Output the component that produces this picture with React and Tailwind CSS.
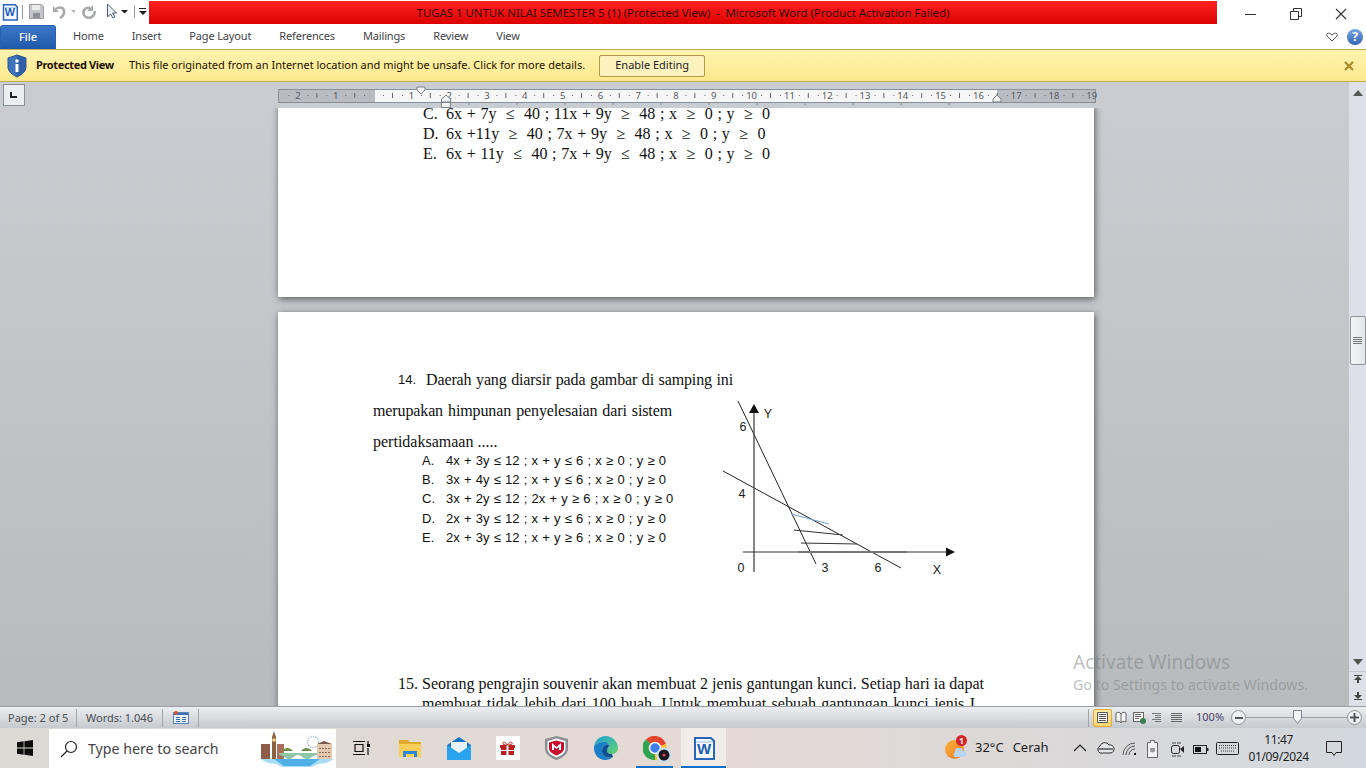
import React from 'react';

const UI = "font-['Noto_Sans','Open_Sans',sans-serif]";
const SERIF = "font-['Liberation_Serif','Times_New_Roman',serif]";

const CM = 37.8;
const ORIGIN = 373.6;

function Ruler() {
  const marks = [];
  for (let n = -3; n <= 19; n++) {
    const x = ORIGIN + n * CM;
    if (n !== 0 && n > -3) {
      marks.push(
        <text key={'n' + n} x={x} y={99} textAnchor="middle" fontSize="9.5" fill="#555a60" fontFamily="Noto Sans, sans-serif">{Math.abs(n)}</text>
      );
    }
    [0.25, 0.5, 0.75].forEach((f) => {
      const px = x + f * CM;
      if (px < 280 || px > 1094) return;
      if (f === 0.5) marks.push(<line key={'t' + n} x1={px} x2={px} y1={93} y2={98} stroke="#666" />);
      else marks.push(<rect key={'d' + n + f} x={px} y={95} width="1" height="1" fill="#666" />);
    });
  }
  const tabs = [469, 517, 565, 613, 661, 709, 757, 805, 853, 901, 949];
  return (
    <svg width="820" height="26" viewBox="278 82 820 26" className="block">
      <rect x="278.5" y="89.5" width="817" height="13" fill="#b9bdc3" stroke="#8b9097" />
      <rect x="375" y="90" width="622" height="12" fill="#f6f6f6" />
      {marks}
      {tabs.map((x) => <line key={x} x1={x} x2={x} y1={102} y2={105} stroke="#8b8f94" />)}
      <path d="M417 87h8v3l-4 4-4-4z" fill="#f2f2f2" stroke="#7d8288" />
      <path d="M441.5 99l4.5-4 4.5 4v3h-9z" fill="#f2f2f2" stroke="#7d8288" />
      <rect x="441.5" y="102.5" width="9" height="5" fill="#f2f2f2" stroke="#7d8288" />
      <path d="M993 99l4-4 4 4v3h-8z" fill="#f2f2f2" stroke="#7d8288" />
    </svg>
  );
}

function WordLogo({ size = 16 }) {
  return (
    <svg width={size} height={size + 2} viewBox="0 0 22 24">
      <path d="M2 2h16l3 3v18H2z" fill="#f4f8fd" stroke="#2a66b8" strokeWidth="2" />
      <path d="M3 6h17" stroke="#9cc0ea" strokeWidth="1" />
      <text x="11" y="18" textAnchor="middle" fontSize="15" fontWeight="700" fill="#1c5cb0" fontFamily="Liberation Sans, sans-serif">W</text>
    </svg>
  );
}

function TitleBar() {
  return (
    <div className="flex h-[24px] shrink-0 items-center bg-white">
      <div className="ml-[2px] w-[17px]"><WordLogo /></div>
      <div className="ml-[3px] h-[14px] w-px bg-[#9a9a9a]" />
      <svg width="126" height="24" viewBox="23 0 126 24" className="shrink-0">
        <path d="M29.5 4.5h12l2 2v12h-14z" fill="#c4c6c9" stroke="#9b9da0" />
        <rect x="32" y="5" width="8" height="5" fill="#eceded" />
        <rect x="33" y="13" width="7" height="5" fill="#8e9093" />
        <path d="M53 6v6h6z" fill="#a7a9ac" />
        <path d="M56 9c4-3 9-1 8 4-.4 2-2 4-4 5" fill="none" stroke="#a7a9ac" strokeWidth="2.5" />
        <path d="M71 10h5l-2.500 3z" fill="#b5b7ba" />
        <path d="M93 5v6h-6z" fill="#a7a9ac" />
        <path d="M90 8c-5-1-8 3-6 7 1.500 3 6 4 9 1 1.500-1.500 2-3 1.500-5" fill="none" stroke="#a7a9ac" strokeWidth="2.500" />
        <path d="M107.500 4v13l3-3 2.500 4 2-1-2.500-4h4z" fill="#eef2f8" stroke="#4f5f75" />
        <path d="M121 10h7l-3.500 3.500z" fill="#1e1e1e" />
        <rect x="134" y="5" width="1" height="13" fill="#9a9a9a" />
        <rect x="139" y="8" width="7" height="1" fill="#1e1e1e" />
        <path d="M139 11h8l-4 4z" fill="#1e1e1e" />
      </svg>
      <div className={`flex h-[23px] w-[1068px] items-center justify-center self-start mt-px bg-gradient-to-b from-[#ff2020] to-[#dc0000] text-[11.5px] tracking-[-0.06px] whitespace-pre text-[#3a0505] ${UI}`}>
        TUGAS 1 UNTUK NILAI SEMESTER 5 (1) (Protected View)  -  Microsoft Word (Product Activation Failed)
      </div>
      <div className="flex flex-1 items-center">
        <svg width="149" height="24" viewBox="1217 0 149 24">
          <rect x="1245" y="14" width="11" height="1" fill="#333" />
          <path d="M1290.500 11.500h8v8h-8zM1293.500 11v-2.500h8v8h-3" fill="none" stroke="#333" />
          <path d="M1336 9l10 10M1346 9l-10 10" stroke="#333" strokeWidth="1.100" />
        </svg>
      </div>
    </div>
  );
}

function Tabs() {
  const items = ['Home', 'Insert', 'Page Layout', 'References', 'Mailings', 'Review', 'View'];
  return (
    <div className={`flex h-[25px] shrink-0 items-center bg-white text-[11px] text-[#3f4247] ${UI}`}>
      <div className="flex h-[24px] w-[56px] items-center justify-center self-end rounded-t-[3px] border border-b-0 border-[#2a5fae] bg-gradient-to-b from-[#3b78c8] to-[#1f58aa] font-medium text-white">File</div>
      <div className="ml-[17px] flex gap-[28px] tracking-[-0.15px]">
        {items.map((t) => <span key={t}>{t}</span>)}
      </div>
      <div className="ml-auto flex items-center pr-[1px]">
        <svg width="12" height="10" viewBox="0 0 12 10" className="mr-[9px]">
          <path d="M6 9L1 4c-1-2 1-3.500 3-2.500L6 3l2-1.500c2-1 4 .5 3 2.500z" fill="#fff" stroke="#555" />
        </svg>
        <div className="flex h-[16px] w-[16px] items-center justify-center rounded-full bg-gradient-to-b from-[#7aa5e0] to-[#2f66b5] text-[12px] leading-none font-bold text-white mr-[2px]">?</div>
      </div>
    </div>
  );
}

function ProtectedBar() {
  return (
    <div className={`flex h-[33px] shrink-0 items-center border-y border-[#c2ab55] bg-gradient-to-b from-[#fff3b0] to-[#fde98c] text-[11px] text-[#1c1200] ${UI}`}>
      <svg width="20" height="24" viewBox="0 0 20 24" className="ml-[7px]">
        <path d="M10 1l9 3v9c0 5-5 8-9 10C6 21 1 18 1 13V4z" fill="#3f73bb" stroke="#2b568f" />
        <path d="M10 1l9 3v9c0 5-5 8-9 10z" fill="#2f5fa6" />
        <circle cx="10" cy="7" r="1.800" fill="#fff" />
        <rect x="8.500" y="10" width="3" height="8" fill="#fff" />
      </svg>
      <span className="ml-[9px] font-bold tracking-[-0.35px]">Protected View</span>
      <span className="ml-[15px]">This file originated from an Internet location and might be unsafe. Click for more details.</span>
      <button className="ml-[14px] h-[22px] w-[106px] rounded-[2px] border border-[#b39a48] bg-[#fdf2bd] text-[11px] text-[#222]">Enable Editing</button>
      <svg width="10" height="10" viewBox="0 0 10 10" className="ml-auto mr-[12px]">
        <path d="M1 1l8 8M9 1l-8 8" stroke="#a98a2b" strokeWidth="2.200" />
      </svg>
    </div>
  );
}

function Graph() {
  const lbl = { fontSize: 12.5, fill: '#222', fontFamily: 'Liberation Sans, sans-serif', textAnchor: 'middle' };
  return (
    <svg width="240" height="180" viewBox="720 400 240 180" className="absolute left-[442px] top-[88px]">
      <path d="M738 401L816 564M723 471L901 568" stroke="#222" fill="none" />
      <path d="M754 572V410" stroke="#444" strokeWidth="1.300" fill="none" />
      <path d="M754 404l-5 9h10z" fill="#111" />
      <path d="M743 552H948" stroke="#333" fill="none" />
      <path d="M955 552l-9-4.500v9z" fill="#111" />
      <path d="M791 514L829 524" stroke="#6f9fd0" fill="none" />
      <path d="M794 530L843 535M801 543L857 544" stroke="#333" fill="none" />
      <path d="M798 552H907" stroke="#777" strokeWidth="2" fill="none" />
      <text x="768" y="418" {...lbl}>Y</text>
      <text x="743" y="431" {...lbl}>6</text>
      <text x="742" y="498" {...lbl}>4</text>
      <text x="741" y="572" {...lbl}>0</text>
      <text x="825" y="572" {...lbl}>3</text>
      <text x="878" y="572" {...lbl}>6</text>
      <text x="937" y="574" {...lbl}>X</text>
    </svg>
  );
}

function Doc() {
  const first = [
    ['C.', '6x + 7y  ≤  40 ; 11x + 9y  ≥  48 ; x  ≥  0 ; y  ≥  0'],
    ['D.', '6x +11y  ≥  40 ; 7x + 9y  ≥  48 ; x  ≥  0 ; y  ≥  0'],
    ['E.', '6x + 11y  ≤  40 ; 7x + 9y  ≤  48 ; x  ≥  0 ; y  ≥  0'],
  ];
  const opts = [
    ['A.', '4x + 3y ≤ 12 ; x + y ≤ 6 ; x ≥ 0 ; y ≥ 0'],
    ['B.', '3x + 4y ≤ 12 ; x + y ≤ 6 ; x ≥ 0 ; y ≥ 0'],
    ['C.', '3x + 2y ≤ 12 ; 2x + y ≥ 6 ; x ≥ 0 ; y ≥ 0'],
    ['D.', '2x + 3y ≤ 12 ; x + y ≤ 6 ; x ≥ 0 ; y ≥ 0'],
    ['E.', '2x + 3y ≤ 12 ; x + y ≥ 6 ; x ≥ 0 ; y ≥ 0'],
  ];
  return (
    <div className="relative min-h-0 flex-1 overflow-hidden bg-gradient-to-b from-[#caccd1] to-[#b8babe] pl-[278px]">
      <div className="-mt-[4px] w-[816px]">
        <div className={`h-[193px] bg-white pl-[145px] text-[16px] leading-[20px] text-[#111] shadow-[1px_2px_7px_rgba(0,0,0,0.55)] ${SERIF}`}>
          {first.map(([a, b]) => (
            <div key={a} className="flex whitespace-pre">
              <span className="w-[23px]">{a}</span>
              <span className="[word-spacing:0.7px]">{b}</span>
            </div>
          ))}
        </div>
        <div className={`relative mt-[15px] h-[500px] bg-white pl-[95px] pt-[52px] text-[16px] text-[#111] shadow-[1px_2px_7px_rgba(0,0,0,0.55)] ${SERIF}`}>
          <div className="h-[87px] leading-[31px]">
            <div className="ml-[25px] flex w-[335px]">
              <span className="w-[28px] font-['Liberation_Sans',sans-serif] text-[13px]">14.</span>
              <span className="flex-1 tracking-[-0.12px] [text-align-last:justify]">Daerah yang diarsir pada gambar di samping ini</span>
            </div>
            <div className="w-[299px] tracking-[-0.12px] [text-align-last:justify]">merupakan himpunan penyelesaian dari sistem</div>
            <div>pertidaksamaan .....</div>
          </div>
          <div className="pl-[49px] font-['Liberation_Sans',sans-serif] text-[13px] leading-[19.2px]">
            {opts.map(([a, b]) => (
              <div key={a} className="flex whitespace-pre">
                <span className="w-[24px]">{a}</span>
                <span className="[word-spacing:0.6px]">{b}</span>
              </div>
            ))}
          </div>
          <div className="mt-[127px] ml-[25px] leading-[20px]">
            <div className="flex w-[586px]">
              <span className="w-[24px]">15.</span>
              <span className="flex-1 [text-align-last:justify]">Seorang pengrajin souvenir akan membuat 2 jenis gantungan kunci. Setiap hari ia dapat</span>
            </div>
            <div className="ml-[24px] w-[553px] [text-align-last:justify]">membuat tidak lebih dari 100 buah. Untuk membuat sebuah gantungan kunci jenis I</div>
          </div>
          <Graph />
        </div>
      </div>
    </div>
  );
}

function ScrollBar() {
  return (
    <div className="flex w-[17px] shrink-0 flex-col items-center bg-[#dde0e7] pt-[8px]">
      <svg width="10" height="6" viewBox="0 0 10 6"><path d="M5 0l5 6H0z" fill="#555" /></svg>
      <div className="mt-[220px] flex h-[49px] w-[16px] items-center justify-center rounded-[2px] border border-[#8f949b] bg-gradient-to-r from-[#f3f4f6] to-[#e4e6ea]">
        <svg width="9" height="8" viewBox="0 0 9 8"><path d="M0 .5h9M0 2.500h9M0 4.500h9M0 6.500h9" stroke="#777" /></svg>
      </div>
      <svg width="10" height="6" viewBox="0 0 10 6" className="mt-auto mb-[6px]"><path d="M5 6l5-6H0z" fill="#555" /></svg>
      <div className="h-px w-full bg-[#c3c6cc]" />
      <svg width="8" height="9" viewBox="0 0 8 9" className="mt-[2px]"><path d="M0 1h8v1H0zM4 2l4 4H5v3H3V6H0z" fill="#444" /></svg>
      <svg width="8" height="9" viewBox="0 0 8 9" className="mt-[9px] mb-[5px]"><path d="M0 7h8v1H0zM4 7L0 3h3V0h2v3h3z" fill="#444" /></svg>
    </div>
  );
}

function Workspace() {
  return (
    <div className="flex min-h-0 flex-1">
      <div className="flex min-w-0 flex-1 flex-col">
        <div className="flex h-[26px] shrink-0 items-center bg-[#c9ccd1]">
          <div className="ml-[3px] flex h-[22px] w-[22px] items-center justify-center border border-[#8b9097] bg-[#eceef1]">
            <svg width="8" height="8" viewBox="0 0 8 8"><path d="M1 1v5h6" fill="none" stroke="#222" strokeWidth="2" /></svg>
          </div>
          <div className="ml-[253px]"><Ruler /></div>
        </div>
        <Doc />
      </div>
      <ScrollBar />
    </div>
  );
}

function StatusBar() {
  return (
    <div className={`flex h-[22px] shrink-0 items-center border-t border-[#9c9fa5] bg-gradient-to-b from-[#eceef1] to-[#c6c9ce] text-[11px] text-[#4a4d52] ${UI}`}>
      <span className="w-[77px] border-r border-[#a2a5aa] pl-[8px] leading-[18px]">Page: 2 of 5</span>
      <span className="w-[86px] border-r border-[#a2a5aa] pl-[9px] leading-[18px]">Words: 1.046</span>
      <div className="flex h-[18px] w-[36px] items-center justify-center border-r border-[#a2a5aa]">
        <svg width="16" height="13" viewBox="0 0 16 13">
          <rect x=".5" y="1.500" width="15" height="11" fill="#e9f0fa" stroke="#5a7fb5" />
          <rect x="1" y="2" width="14" height="2" fill="#3b6fb5" />
          <path d="M3 6.500h4M9 6.500h4M3 8.500h4M9 8.500h4M3 10.500h4M9 10.500h4" stroke="#3b6fb5" />
          <circle cx="3" cy="2" r="2" fill="#d9543c" />
        </svg>
      </div>
      <div className="ml-auto h-[18px] w-px bg-[#a2a5aa]" />
      <div className="ml-[4px] flex h-[18px] w-[19px] items-center justify-center rounded-[2px] border border-[#e0a93a] bg-gradient-to-b from-[#fdeaa5] to-[#fbd66e]">
        <svg width="11" height="11" viewBox="0 0 11 11"><path d="M.5.500h10v10H.500zM2 2.500h7M2 4.500h7M2 6.500h7M2 8.500h7" fill="#fff" stroke="#555" /></svg>
      </div>
      <svg width="74" height="14" viewBox="1114 0 74 14" className="ml-[2px]">
        <path d="M1116 2c2-1 4-1 5 1 1-2 3-2 5-1v9c-2-1-4-1-5 1-1-2-3-2-5-1zM1121 3v9" fill="#f4f4f4" stroke="#666" />
        <rect x="1133.500" y="1.500" width="10" height="9" fill="#f4f4f4" stroke="#666" />
        <path d="M1135 3.500h6M1135 5.500h6M1135 7.500h4" stroke="#666" />
        <circle cx="1143" cy="10" r="3" fill="#3d7f5a" />
        <path d="M1152 2.500h9M1155 4.500h6M1155 6.500h6M1152 8.500h9M1155 10.500h6" stroke="#777" />
        <path d="M1171 2.500h11M1171 4.500h11M1171 6.500h11M1171 8.500h11M1171 10.500h11" stroke="#666" />
      </svg>
      <span className="ml-[8px] w-[29px] whitespace-nowrap text-[#4c3f66]">100%</span>
      <div className="ml-[6px] flex h-[15px] w-[15px] items-center justify-center rounded-full border border-[#8e9197] bg-[#eef0f3]">
        <div className="h-[2px] w-[8px] bg-[#555]" />
      </div>
      <div className="relative h-px w-[101px] bg-[#9ea1a6]">
        <svg width="9" height="14" viewBox="0 0 9 14" className="absolute left-[47px] -top-[7px]">
          <path d="M.5.500h8v8l-4 5-4-5z" fill="#f4f5f7" stroke="#83878d" />
        </svg>
      </div>
      <div className="mr-[4px] flex h-[15px] w-[15px] items-center justify-center rounded-full border border-[#8e9197] bg-[#eef0f3]">
        <svg width="9" height="9" viewBox="0 0 9 9"><path d="M0 4.500h9M4.500 0v9" stroke="#555" strokeWidth="2" /></svg>
      </div>
    </div>
  );
}

function LondonArt() {
  return (
    <svg width="74" height="38" viewBox="0 0 74 38" className="absolute left-[211px] top-[1px]">
      <path d="M0 29h74l-8 4-8 1-6 3H22l-6-3-8-1z" fill="#a9dcf5" />
      <path d="M14 29l10 7h26l10-7z" fill="#4fb0e8" />
      <rect x="1" y="14" width="9" height="15" fill="#8f5c4c" />
      <rect x="17" y="14" width="7" height="15" fill="#a8705a" />
      <path d="M12 7l2-6 2 6v22h-4z" fill="#8d6242" />
      <circle cx="14" cy="10" r="1.800" fill="#f3d98a" />
      <path d="M19 23h38v2c-5 0-6 4-10 4s-5-4-9-4-5 4-9 4-5-4-10-4z" fill="#8fc7a6" />
      <path d="M22 21c3-4 8-4 11 0zM41 21c3-4 8-4 11 0z" fill="#6e8b4b" />
      <circle cx="53" cy="12" r="5.500" fill="none" stroke="#b9c7d8" strokeWidth="1.500" strokeDasharray="1.500 1" />
      <rect x="57" y="14" width="15" height="15" fill="#e4c9b2" />
      <path d="M57 14l7-3 8 3z" fill="#7b5a4a" />
      <path d="M59 18.500h11M59 22.500h11M59 26.500h11" stroke="#8b6b58" strokeDasharray="2 1" />
    </svg>
  );
}

function Slot({ active, running, children }) {
  return (
    <div className={`relative flex h-full items-center justify-center ${active ? 'ml-[2px] w-[45px] bg-[#f1ece8]' : 'w-[49px]'}`}>
      {children}
      {running && <div className={`absolute bottom-0 h-[2px] bg-[#0f6fc6] ${active ? 'inset-x-0' : 'inset-x-[6px]'}`} />}
    </div>
  );
}

function Taskbar() {
  return (
    <div className={`flex h-[40px] shrink-0 items-center bg-gradient-to-r from-[#dbdad5] via-[#e5d9d3] to-[#d2d8de] text-[#1d1d1d] ${UI}`}>
      <div className="flex h-full w-[49px] items-center justify-center">
        <svg width="16" height="16" viewBox="0 0 16 16"><path d="M0 2.200L6.600 1.300V7.600H0zM7.400 1.200L16 0V7.600H7.400zM0 8.400H6.600V14.700L0 13.800zM7.400 8.400H16V16L7.400 14.800z" fill="#0c0c0c" /></svg>
      </div>
      <div className="relative flex h-[39px] w-[287px] items-center self-end bg-white">
        <svg width="18" height="18" viewBox="0 0 18 18" className="ml-[11px]"><circle cx="11" cy="7" r="5.500" fill="none" stroke="#222" strokeWidth="1.200" /><path d="M7 11l-6 6" stroke="#222" strokeWidth="1.300" /></svg>
        <span className="ml-[10px] text-[14.2px] text-[#444]">Type here to search</span>
        <LondonArt />
      </div>
      <Slot>
        <svg width="18" height="16" viewBox="0 0 18 16"><path d="M1 1.500h12M1 14.500h12M3 4.500h8v7H3zM16 8v7M16 1v3" fill="none" stroke="#111" strokeWidth="1.200" /><rect x="15" y="4" width="3" height="3" fill="#111" /></svg>
      </Slot>
      <Slot>
        <svg width="22" height="19" viewBox="0 0 22 19">
          <path d="M0 1h9l2 2h11v4H0z" fill="#e0a92c" />
          <rect y="5" width="22" height="13" fill="#f8cf58" />
          <path d="M4 18v-6h14v6h-3v-3H7v3z" fill="#2b88d8" />
        </svg>
      </Slot>
      <Slot>
        <svg width="24" height="23" viewBox="0 0 24 23">
          <path d="M12 0l12 8v15H0V8z" fill="#1a74c4" />
          <path d="M4 5h16v8l-8 5-8-5z" fill="#e6f3fb" />
          <path d="M0 8l12 8 12-8v15H0z" fill="#29a3ee" />
        </svg>
      </Slot>
      <Slot>
        <div className="flex h-[24px] w-[24px] items-center justify-center bg-white">
          <svg width="15" height="15" viewBox="0 0 15 15">
            <rect x="1" y="6" width="13" height="8" fill="#b8201e" />
            <rect y="4" width="15" height="3" fill="#b8201e" />
            <rect x="6.500" y="4" width="2" height="10" fill="#fff" />
            <rect y="9" width="15" height="1" fill="#fff" />
            <path d="M7.500 4C5 0 2 1 3 3c.5 1 3 1 4.500 1zM7.500 4C10 0 13 1 12 3c-.5 1-3 1-4.500 1z" fill="none" stroke="#b8201e" />
          </svg>
        </div>
      </Slot>
      <Slot>
        <svg width="23" height="24" viewBox="0 0 23 24">
          <path d="M11.500 0L23 3v10c0 5-6 9-11.500 11C6 22 0 18 0 13V3z" fill="#8a8f93" />
          <path d="M11.500 2.500L20.500 5v8c0 4-5 7-9 8.500-4-1.500-9-4.500-9-8.500V5z" fill="#fff" />
          <path d="M11.500 4.500L19 6.500v6c0 3.500-4 5.500-7.500 7C8 18 4 16 4 12.500v-6z" fill="#c8102e" />
          <path d="M7 14V7l4.500 4L16 7v7h-2v-3l-2.500 2L9 11v3z" fill="#fff" />
        </svg>
      </Slot>
      <Slot>
        <svg width="24" height="24" viewBox="0 0 24 24">
          <defs>
            <linearGradient id="edgeA" x1="0" y1="0" x2="1" y2="1"><stop offset="0" stopColor="#1f9fd8" /><stop offset="1" stopColor="#62d36f" /></linearGradient>
          </defs>
          <path d="M12 0C18 0 24 5 24 12c0 4-3 6-6 6-3 0-5-1-5-3 0-3 2-4 2-6-1-3-4-4-7-3C3 7 0 9 0 12 0 5 5 0 12 0z" fill="url(#edgeA)" />
          <path d="M0 12c0-3 3-5 8-6 3-1 6 0 7 3-3-1-7 1-7 6 0 5 5 8 11 6-2 2-5 3-8 3-6 0-11-5-11-12z" fill="#1780c9" />
          <path d="M8 15c0-5 4-7 7-6 0 2-2 3-2 6 0 2 2 3 5 3l1 3c-6 2-11-1-11-6z" fill="#0e4f93" />
        </svg>
      </Slot>
      <Slot running>
        <div className="relative h-[24px] w-[24px]">
          <svg width="24" height="24" viewBox="0 0 24 24">
            <path d="M12 12L3 3.500A12 12 0 0 1 23 8z" fill="#e4432d" />
            <path d="M12 12l11-4a12 12 0 0 1-11 16z" fill="#f6c02c" />
            <path d="M12 12v12A12 12 0 0 1 3 3.500z" fill="#2fa44f" />
            <circle cx="12" cy="12" r="5.500" fill="#3f7ee8" stroke="#fff" strokeWidth="1.500" />
          </svg>
          <svg width="16" height="16" viewBox="0 0 16 16" className="absolute -right-[5px] -bottom-[3px]">
            <circle cx="8" cy="8" r="7.500" fill="#c8e3f7" />
            <circle cx="8" cy="8" r="5.500" fill="#1a1a1e" />
            <circle cx="8" cy="8" r="1.500" fill="#e34b6b" />
          </svg>
        </div>
      </Slot>
      <Slot active running><WordLogo size={22} /></Slot>

      <div className="ml-[219px] flex items-center">
        <div className="relative h-[22px] w-[22px]">
          <div className="absolute bottom-0 left-0 h-[19px] w-[19px] rounded-full bg-gradient-to-br from-[#f8b13d] to-[#ee7b1f]" />
          <svg width="15" height="9" viewBox="0 0 15 9" className="absolute bottom-[2px] right-0"><path d="M3 9a3 3 0 0 1 0-5 4 4 0 0 1 8-1 3 3 0 0 1 1 6z" fill="#b9d4ef" /></svg>
          <div className="absolute -top-[2px] right-0 flex h-[11px] w-[11px] items-center justify-center rounded-full bg-[#d3262a] text-[8px] leading-none font-bold text-white">1</div>
        </div>
        <span className="ml-[8px] text-[13px]">32°C</span>
        <span className="ml-[9px] text-[13px]">Cerah</span>
        <svg width="170" height="24" viewBox="1070 0 170 24" className="ml-[22px]">
          <path d="M1073 15l6-6 6 6" fill="none" stroke="#222" strokeWidth="1.200" />
          <path d="M1099 17a4 4 0 0 1 0-7 5 5 0 0 1 9-1 4 4 0 0 1 2 8z" fill="#e4e6e8" stroke="#333" />
          <path d="M1096 13h16" stroke="#777" strokeWidth="2" />
          <path d="M1122 19a12 12 0 0 1 12-12M1125 19a9 9 0 0 1 9-9M1128 19a6 6 0 0 1 6-6" fill="none" stroke="#555" />
          <rect x="1133" y="17" width="2" height="2" fill="#111" />
          <path d="M1146.500 6.500h3v-2h4v2h3v15h-10z" fill="#f1f2f3" stroke="#666" />
          <path d="M1149 12h5v2a2.500 2.500 0 0 1-5 0z" fill="#999" />
          <path d="M1171 7h9M1171 20h9" stroke="#444" strokeDasharray="4 1" />
          <rect x="1170.500" y="9.500" width="8" height="8" rx="2" fill="none" stroke="#222" />
          <path d="M1179 13l4-3v7z" fill="#222" />
          <rect x="1192.500" y="9.500" width="13" height="8" fill="none" stroke="#222" />
          <rect x="1194" y="11" width="6" height="5" fill="#111" />
          <rect x="1206" y="12" width="1.500" height="3" fill="#222" />
          <rect x="1215.500" y="6.500" width="22" height="12" rx="1" fill="none" stroke="#222" />
          <path d="M1218 9.500h17M1218 12h17M1220 15h13" stroke="#333" strokeDasharray="1 1" />
        </svg>
        <div className="ml-[7px] flex w-[62px] flex-col items-center text-[12px] leading-[17px] tracking-[-0.35px]">
          <span>11:47</span>
          <span>01/09/2024</span>
        </div>
        <svg width="16" height="15" viewBox="0 0 16 15" className="ml-[16px]"><path d="M.5.500h15v11h-5.500l-2 3-2-3h-5.500z" fill="none" stroke="#222" /></svg>
      </div>
    </div>
  );
}

export default function App() {
  return (
    <div className="relative flex h-[768px] w-[1366px] flex-col overflow-hidden bg-white">
      <TitleBar />
      <Tabs />
      <ProtectedBar />
      <Workspace />
      <StatusBar />
      <Taskbar />
      <div className={`pointer-events-none absolute left-[1073px] top-[649px] text-[#7c7f83]/50 ${UI}`}>
        <div className="text-[19px] leading-[26px]">Activate Windows</div>
        <div className="mt-px text-[14.2px] leading-[18px]">Go to Settings to activate Windows.</div>
      </div>
    </div>
  );
}
